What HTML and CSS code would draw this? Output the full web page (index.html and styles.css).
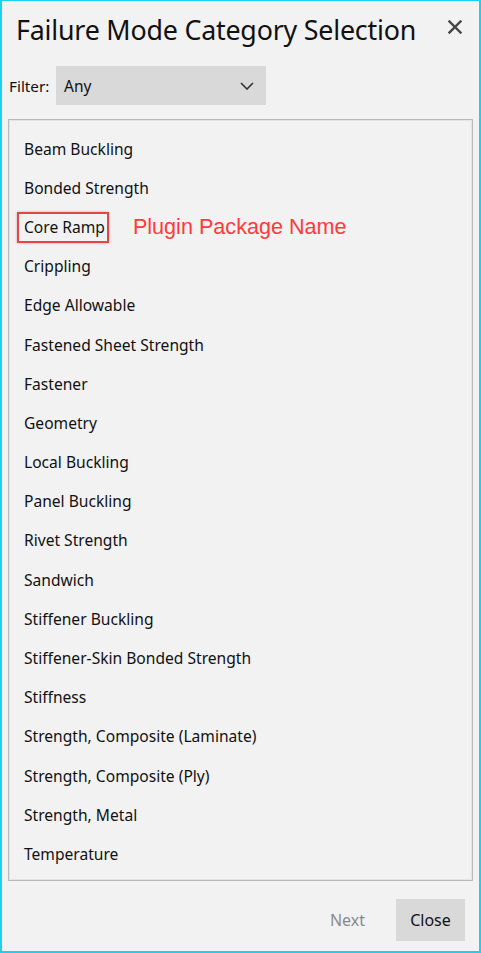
FILE: index.html
```html
<!DOCTYPE html>
<html>
<head>
<meta charset="utf-8">
<link rel="stylesheet" href="styles.css">
</head>
<body>
<div class="frame">
  <div class="header">
    <div class="title">Failure Mode Category Selection</div>
    <div class="close-x">
      <svg width="14" height="14" viewBox="0 0 14 14"><path d="M1.5 1.5 L12.5 12.5 M12.5 1.5 L1.5 12.5" stroke="#444" stroke-width="2.4" stroke-linecap="square"/></svg>
    </div>
  </div>
  <div class="filter-row">
    <span class="filter-label">Filter:</span>
    <div class="dropdown">
      <span>Any</span>
      <svg width="14" height="8" viewBox="0 0 14 8"><path d="M1 1 L7 7 L13 1" fill="none" stroke="#333" stroke-width="1.6"/></svg>
    </div>
  </div>
  <div class="list">
    <div class="item">Beam Buckling</div>
    <div class="item">Bonded Strength</div>
    <div class="item"><span class="marked">Core Ramp</span><span class="note">Plugin Package Name</span></div>
    <div class="item">Crippling</div>
    <div class="item">Edge Allowable</div>
    <div class="item">Fastened Sheet Strength</div>
    <div class="item">Fastener</div>
    <div class="item">Geometry</div>
    <div class="item">Local Buckling</div>
    <div class="item">Panel Buckling</div>
    <div class="item">Rivet Strength</div>
    <div class="item">Sandwich</div>
    <div class="item">Stiffener Buckling</div>
    <div class="item">Stiffener-Skin Bonded Strength</div>
    <div class="item">Stiffness</div>
    <div class="item">Strength, Composite (Laminate)</div>
    <div class="item">Strength, Composite (Ply)</div>
    <div class="item">Strength, Metal</div>
    <div class="item">Temperature</div>
  </div>
  <div class="footer">
    <div class="btn btn-disabled">Next</div>
    <div class="btn btn-close">Close</div>
  </div>
</div>
</body>
</html>
```
FILE: styles.css
```css
html, body {
  margin: 0;
  padding: 0;
  background: #f2f2f2;
}
.frame {
  box-sizing: border-box;
  width: 481px;
  height: 953px;
  border: 2px solid #1cd0f2;
  border-top-width: 1px;
  background: #f2f2f2;
  font-family: "Noto Sans", "Open Sans", sans-serif;
  color: #111;
  display: flex;
  flex-direction: column;
}
.header {
  height: 56px;
  display: flex;
  align-items: center;
  justify-content: space-between;
  padding: 0 17px 0 14px;
}
.title {
  font-size: 26.8px;
  color: #111;
  letter-spacing: -0.2px;
}
.close-x {
  display: flex;
  align-items: center;
  margin-top: -4px;
}
.filter-row {
  display: flex;
  align-items: center;
  margin-top: 9px;
  padding-left: 7px;
}
.filter-label {
  font-size: 15.3px;
  width: 47px;
}
.dropdown {
  box-sizing: border-box;
  width: 210px;
  height: 39px;
  background: #d9d9d9;
  display: flex;
  align-items: center;
  justify-content: space-between;
  padding: 0 12px 0 8px;
  font-size: 15.5px;
}
.list {
  box-sizing: border-box;
  margin: 14px 0 0 6px;
  width: 465px;
  height: 762px;
  border: 1px solid #b9b9b9;
  box-shadow: inset 0 0 0 1px #e4e4e4;
  padding: 9px 0 0 15px;
}
.item {
  height: 39.2px;
  display: flex;
  align-items: center;
  font-size: 15.6px;
  color: #111;
}
.marked {
  box-sizing: border-box;
  height: 31px;
  display: inline-flex;
  align-items: center;
  border: 2px solid #e04848;
  box-shadow: 0 0 2px rgba(200, 60, 60, 0.5);
  margin-left: -7px;
  padding: 0 2px 0 5px;
  margin-top: 1px;
}
.note {
  font-family: "Liberation Sans", Arial, sans-serif;
  font-size: 21.6px;
  color: #ff3a3a;
  margin-left: 24px;
}
.footer {
  display: flex;
  justify-content: flex-end;
  gap: 14px;
  margin-top: 18px;
  padding-right: 14px;
}
.btn {
  width: 69px;
  height: 42px;
  display: flex;
  align-items: center;
  justify-content: center;
  font-size: 16px;
}
.btn-disabled {
  color: #8a8a8a;
}
.btn-close {
  background: #d9d9d9;
  color: #111;
}
```
